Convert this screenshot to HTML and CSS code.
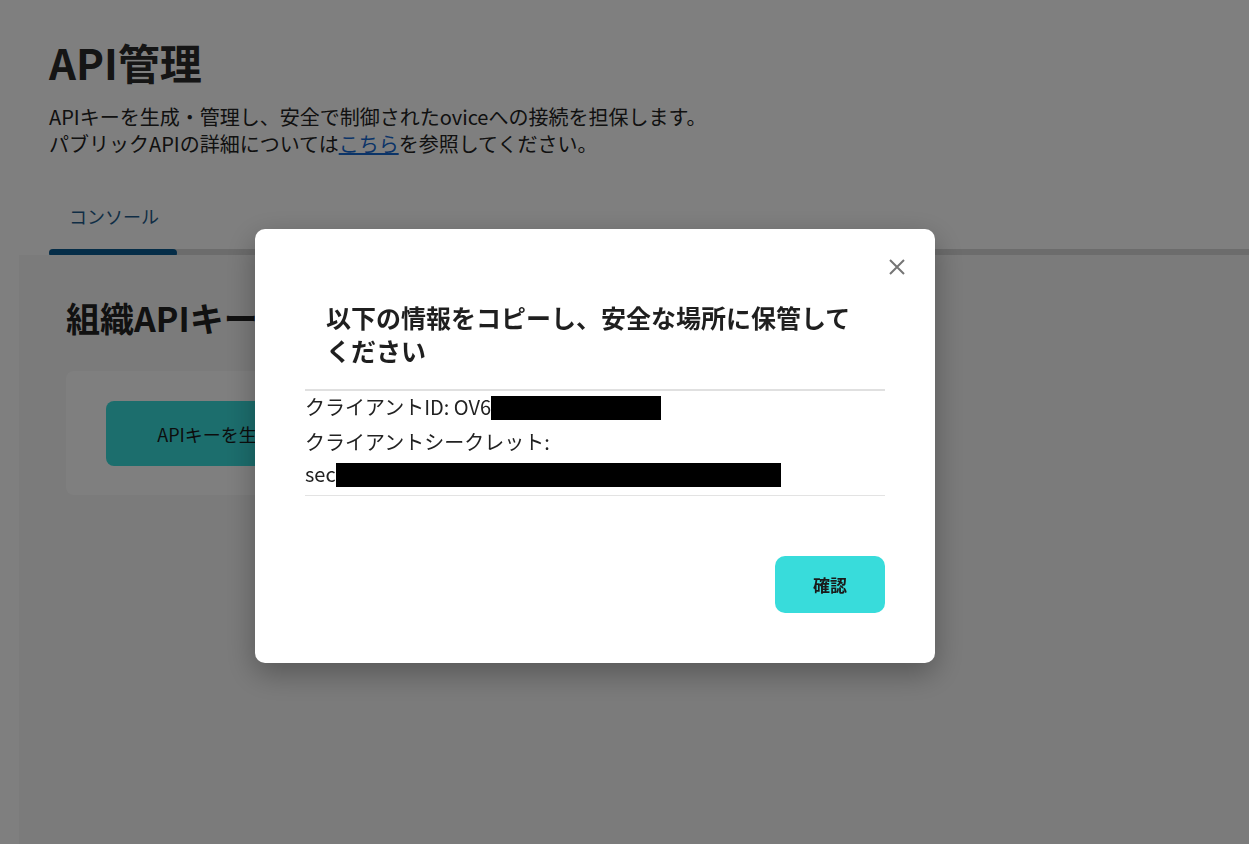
FILE: index.html
```html
<!DOCTYPE html>
<html lang="ja">
<head>
  <meta charset="UTF-8">
  <meta name="viewport" content="width=device-width, initial-scale=1.0">
  <title>API管理</title>
  <link rel="stylesheet" href="styles.css">
</head>
<body>
  <div class="page">
    <header class="page-header">
      <h1>API管理</h1>
      <p>APIキーを生成・管理し、安全で制御されたoviceへの接続を担保します。<br>パブリックAPIの詳細については<a href="#">こちら</a>を参照してください。</p>
    </header>

    <nav class="tabs">
      <div class="tab">コンソール</div>
      <div class="tab-track">
        <div class="tab-indicator"></div>
      </div>
    </nav>

    <main class="content">
      <h2>組織APIキー</h2>
      <div class="card">
        <button class="primary-btn">APIキーを生成</button>
      </div>
    </main>
  </div>

  <!-- modal -->
  <div class="overlay"></div>
  <div class="modal">
    <button class="close-btn" aria-label="閉じる">
      <svg width="18" height="18" viewBox="0 0 18 18">
        <path d="M2 2 L16 16 M16 2 L2 16" stroke="#757575" stroke-width="2" fill="none"/>
      </svg>
    </button>
    <h3 class="modal-title">以下の情報をコピーし、安全な場所に保管してください</h3>
    <div class="info">
      <p class="info-line">クライアントID: OV6<span class="redact redact-id"></span></p>
      <p class="info-line">クライアントシークレット: <span class="nowrap">sec<span class="redact redact-secret"></span></span></p>
    </div>
    <div class="modal-actions">
      <button class="confirm-btn">確認</button>
    </div>
  </div>
</body>
</html>
```

FILE: styles.css
```css
/* Basic Reset */
* {
  margin: 0;
  padding: 0;
  box-sizing: border-box;
  font-family: "Noto Sans CJK JP", "Noto Sans", sans-serif;
}

body {
  background: #fff;
  color: #222;
  min-height: 100vh;
  overflow: hidden;
}

/* Page */
.page {
  display: flex;
  flex-direction: column;
  min-height: 100vh;
}

.page-header {
  padding: 33px 49px 0;
}

h1 {
  font-size: 42px;
  font-weight: 700;
  line-height: 58px;
  color: #2a2a2a;
}

.page-header p {
  margin-top: 12px;
  font-size: 20px;
  line-height: 27px;
}

.page-header a {
  color: #1769d1;
  text-decoration: underline;
}

/* Tabs */
.tabs {
  margin-top: 46px;
  padding-left: 49px;
}

.tab {
  display: inline-block;
  padding: 0 20px 19px;
  font-size: 18px;
  line-height: 27px;
  color: #1e5b8a;
}

.tab-track {
  height: 6px;
  background: #d8d8d8;
  border-radius: 3px 0 0 3px;
  margin-top: 1px;
}

.tab-indicator {
  width: 128px;
  height: 8px;
  margin-top: -1px;
  border-radius: 4px;
  background: #0a5a90;
}

/* Content */
.content {
  flex: 1;
  margin-left: 19px;
  padding: 39px 47px;
  background: #f6f6f6;
}

h2 {
  font-size: 34px;
  font-weight: 700;
  line-height: 48px;
  color: #222;
}

.card {
  width: 700px;
  margin-top: 29px;
  padding: 30px 40px 29px;
  background: #fff;
  border-radius: 8px;
}

.primary-btn {
  width: 220px;
  height: 65px;
  border: none;
  border-radius: 8px;
  background: #39dcdb;
  color: #1a1a1a;
  font-size: 18px;
}

/* Modal */
.overlay {
  position: fixed;
  inset: 0;
  background: rgba(0, 0, 0, 0.5);
}

.modal {
  position: fixed;
  left: 255px;
  top: 229px;
  width: 680px;
  height: 434px;
  padding: 50px;
  background: #fff;
  border-radius: 10px;
  box-shadow: 0 10px 30px rgba(0, 0, 0, 0.3);
}

.close-btn {
  position: absolute;
  top: 29px;
  right: 29px;
  width: 18px;
  height: 18px;
  border: none;
  background: none;
  cursor: pointer;
}

.close-btn svg {
  display: block;
}

.modal-title {
  margin: 22px 0 22px;
  padding: 0 21px;
  font-size: 25px;
  font-weight: 700;
  line-height: 33px;
  color: #1f1f1f;
}

.info {
  border-top: 2px solid #e0e0e0;
  border-bottom: 1px solid #e3e3e3;
  padding-bottom: 5px;
}

.info-line {
  font-size: 20px;
  line-height: 32px;
  color: #222;
}

.info-line + .info-line {
  margin-top: 3px;
}

.nowrap {
  white-space: nowrap;
}

.redact {
  display: inline-block;
  height: 24px;
  vertical-align: -5px;
  background: #000;
}

.redact-id {
  width: 170px;
}

.redact-secret {
  width: 445px;
}

.modal-actions {
  display: flex;
  justify-content: flex-end;
  margin-top: 60px;
}

.confirm-btn {
  width: 110px;
  height: 57px;
  border: none;
  border-radius: 10px;
  background: #38dcdb;
  color: #1a1a1a;
  font-size: 17px;
  font-weight: 700;
  cursor: pointer;
}
```
